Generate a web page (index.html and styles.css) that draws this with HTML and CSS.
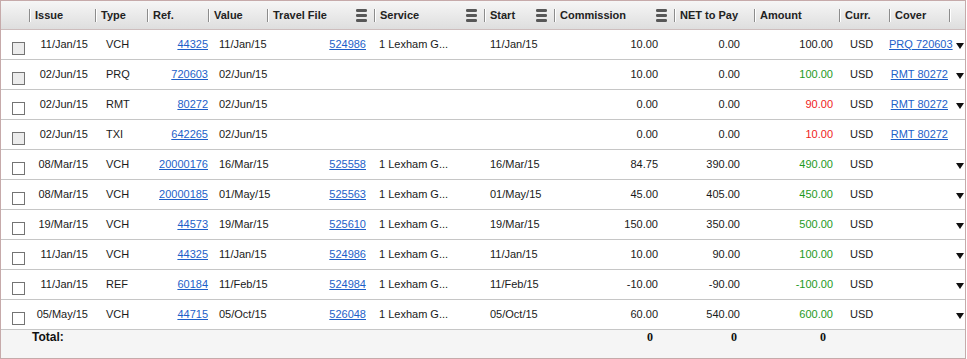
FILE: index.html
```html
<!DOCTYPE html>
<html>
<head>
<meta charset="utf-8">
<link rel="stylesheet" href="styles.css">
</head>
<body>
<div class="grid">
  <div class="row head">
    <div class="hc"></div>
    <div class="hc sep"><span>Issue</span></div>
    <div class="hc sep"><span>Type</span></div>
    <div class="hc sep"><span>Ref.</span></div>
    <div class="hc sep"><span>Value</span></div>
    <div class="hc sep menu"><span>Travel File</span><svg class="ham" width="11" height="13" viewBox="0 0 11 13"><rect x="0" y="0" width="11" height="3" rx="1.3"/><rect x="0" y="5" width="11" height="3" rx="1.3"/><rect x="0" y="10" width="11" height="3" rx="1.3"/></svg></div>
    <div class="hc sep menu"><span>Service</span><svg class="ham" width="11" height="13" viewBox="0 0 11 13"><rect x="0" y="0" width="11" height="3" rx="1.3"/><rect x="0" y="5" width="11" height="3" rx="1.3"/><rect x="0" y="10" width="11" height="3" rx="1.3"/></svg></div>
    <div class="hc sep menu"><span>Start</span><svg class="ham" width="11" height="13" viewBox="0 0 11 13"><rect x="0" y="0" width="11" height="3" rx="1.3"/><rect x="0" y="5" width="11" height="3" rx="1.3"/><rect x="0" y="10" width="11" height="3" rx="1.3"/></svg></div>
    <div class="hc sep menu"><span>Commission</span><svg class="ham" width="11" height="13" viewBox="0 0 11 13"><rect x="0" y="0" width="11" height="3" rx="1.3"/><rect x="0" y="5" width="11" height="3" rx="1.3"/><rect x="0" y="10" width="11" height="3" rx="1.3"/></svg></div>
    <div class="hc sep"><span>NET to Pay</span></div>
    <div class="hc sep"><span>Amount</span></div>
    <div class="hc sep"><span>Curr.</span></div>
    <div class="hc sep"><span>Cover</span></div>
    <div class="hc sep"></div>
  </div>

  <div class="row">
    <div class="c"><span class="cb grey"></span></div>
    <div class="c issue">11/Jan/15</div><div class="c type">VCH</div><div class="c ref"><a href="#">44325</a></div><div class="c value">11/Jan/15</div>
    <div class="c tf"><a href="#">524986</a></div><div class="c svc">1 Lexham G...</div><div class="c start">11/Jan/15</div>
    <div class="c comm">10.00</div><div class="c net">0.00</div><div class="c amt">100.00</div><div class="c curr">USD</div>
    <div class="c cover"><a href="#">PRQ 720603</a></div><div class="c dd"><span class="arrow"></span></div>
  </div>
  <div class="row">
    <div class="c"><span class="cb grey"></span></div>
    <div class="c issue">02/Jun/15</div><div class="c type">PRQ</div><div class="c ref"><a href="#">720603</a></div><div class="c value">02/Jun/15</div>
    <div class="c tf"></div><div class="c svc"></div><div class="c start"></div>
    <div class="c comm">10.00</div><div class="c net">0.00</div><div class="c amt pos">100.00</div><div class="c curr">USD</div>
    <div class="c cover"><a href="#">RMT 80272</a></div><div class="c dd"><span class="arrow"></span></div>
  </div>
  <div class="row">
    <div class="c"><span class="cb"></span></div>
    <div class="c issue">02/Jun/15</div><div class="c type">RMT</div><div class="c ref"><a href="#">80272</a></div><div class="c value">02/Jun/15</div>
    <div class="c tf"></div><div class="c svc"></div><div class="c start"></div>
    <div class="c comm">0.00</div><div class="c net">0.00</div><div class="c amt neg">90.00</div><div class="c curr">USD</div>
    <div class="c cover"><a href="#">RMT 80272</a></div><div class="c dd"><span class="arrow"></span></div>
  </div>
  <div class="row">
    <div class="c"><span class="cb grey"></span></div>
    <div class="c issue">02/Jun/15</div><div class="c type">TXI</div><div class="c ref"><a href="#">642265</a></div><div class="c value">02/Jun/15</div>
    <div class="c tf"></div><div class="c svc"></div><div class="c start"></div>
    <div class="c comm">0.00</div><div class="c net">0.00</div><div class="c amt neg">10.00</div><div class="c curr">USD</div>
    <div class="c cover"><a href="#">RMT 80272</a></div><div class="c dd"></div>
  </div>
  <div class="row">
    <div class="c"><span class="cb"></span></div>
    <div class="c issue">08/Mar/15</div><div class="c type">VCH</div><div class="c ref"><a href="#">20000176</a></div><div class="c value">16/Mar/15</div>
    <div class="c tf"><a href="#">525558</a></div><div class="c svc">1 Lexham G...</div><div class="c start">16/Mar/15</div>
    <div class="c comm">84.75</div><div class="c net">390.00</div><div class="c amt pos">490.00</div><div class="c curr">USD</div>
    <div class="c cover"></div><div class="c dd"><span class="arrow"></span></div>
  </div>
  <div class="row">
    <div class="c"><span class="cb"></span></div>
    <div class="c issue">08/Mar/15</div><div class="c type">VCH</div><div class="c ref"><a href="#">20000185</a></div><div class="c value">01/May/15</div>
    <div class="c tf"><a href="#">525563</a></div><div class="c svc">1 Lexham G...</div><div class="c start">01/May/15</div>
    <div class="c comm">45.00</div><div class="c net">405.00</div><div class="c amt pos">450.00</div><div class="c curr">USD</div>
    <div class="c cover"></div><div class="c dd"><span class="arrow"></span></div>
  </div>
  <div class="row">
    <div class="c"><span class="cb"></span></div>
    <div class="c issue">19/Mar/15</div><div class="c type">VCH</div><div class="c ref"><a href="#">44573</a></div><div class="c value">19/Mar/15</div>
    <div class="c tf"><a href="#">525610</a></div><div class="c svc">1 Lexham G...</div><div class="c start">19/Mar/15</div>
    <div class="c comm">150.00</div><div class="c net">350.00</div><div class="c amt pos">500.00</div><div class="c curr">USD</div>
    <div class="c cover"></div><div class="c dd"><span class="arrow"></span></div>
  </div>
  <div class="row">
    <div class="c"><span class="cb"></span></div>
    <div class="c issue">11/Jan/15</div><div class="c type">VCH</div><div class="c ref"><a href="#">44325</a></div><div class="c value">11/Jan/15</div>
    <div class="c tf"><a href="#">524986</a></div><div class="c svc">1 Lexham G...</div><div class="c start">11/Jan/15</div>
    <div class="c comm">10.00</div><div class="c net">90.00</div><div class="c amt pos">100.00</div><div class="c curr">USD</div>
    <div class="c cover"></div><div class="c dd"><span class="arrow"></span></div>
  </div>
  <div class="row">
    <div class="c"><span class="cb"></span></div>
    <div class="c issue">11/Jan/15</div><div class="c type">REF</div><div class="c ref"><a href="#">60184</a></div><div class="c value">11/Feb/15</div>
    <div class="c tf"><a href="#">524984</a></div><div class="c svc">1 Lexham G...</div><div class="c start">11/Feb/15</div>
    <div class="c comm">-10.00</div><div class="c net">-90.00</div><div class="c amt pos">-100.00</div><div class="c curr">USD</div>
    <div class="c cover"></div><div class="c dd"><span class="arrow"></span></div>
  </div>
  <div class="row">
    <div class="c"><span class="cb"></span></div>
    <div class="c issue">05/May/15</div><div class="c type">VCH</div><div class="c ref"><a href="#">44715</a></div><div class="c value">05/Oct/15</div>
    <div class="c tf"><a href="#">526048</a></div><div class="c svc">1 Lexham G...</div><div class="c start">05/Oct/15</div>
    <div class="c comm">60.00</div><div class="c net">540.00</div><div class="c amt pos">600.00</div><div class="c curr">USD</div>
    <div class="c cover"></div><div class="c dd"><span class="arrow"></span></div>
  </div>

  <div class="row total">
    <div class="t"></div>
    <div class="t tlabel">Total:</div>
    <div class="t"></div><div class="t"></div><div class="t"></div><div class="t"></div><div class="t"></div><div class="t"></div>
    <div class="t tnum tcomm">0</div><div class="t tnum tnet">0</div><div class="t tnum tamt">0</div>
    <div class="t"></div><div class="t"></div><div class="t"></div>
  </div>
</div>
</body>
</html>
```
FILE: styles.css
```css
html, body {
  margin: 0;
  padding: 0;
  background: #ffffff;
}

.grid {
  width: 964px;
  border: 1px solid #c6aaaa;
  font-family: "Liberation Sans", Arial, sans-serif;
  font-size: 11px;
  color: #1a1a1a;
}

.row {
  display: grid;
  grid-template-columns: 28px 66px 52px 61px 59px 107px 110px 70px 120px 80px 85px 50px 60px 16px;
  height: 30px;
  box-sizing: border-box;
  border-bottom: 1px solid #c6c6c6;
  align-items: center;
}

.head {
  height: 29px;
  background: linear-gradient(#f6f6f6, #dedede);
  border-bottom: 1px solid #cdbdbd;
  font-weight: bold;
  color: #222;
}

.hc {
  position: relative;
  height: 100%;
  display: flex;
  align-items: center;
  justify-content: space-between;
  padding: 0 7px 0 6px;
  white-space: nowrap;
}

.hc.sep::before {
  content: "";
  position: absolute;
  left: 0;
  top: 8px;
  width: 1px;
  height: 13px;
  background: #8c8c8c;
  box-shadow: 1px 0 0 #ffffff;
}

.ham {
  display: block;
  fill: #575757;
  margin-top: 1px;
}

.c {
  white-space: nowrap;
  line-height: 13px;
}

.c a {
  color: #1d5fc9;
  text-decoration: underline;
}

.cb {
  display: block;
  width: 13px;
  height: 13px;
  box-sizing: border-box;
  border: 1px solid #747474;
  background: #ffffff;
  margin: 8px 0 0 11px;
}

.cb.grey {
  background: #ececec;
}

.issue { text-align: right; padding-right: 7px; }
.type { padding-left: 11px; }
.ref { text-align: right; padding-right: 0; }
.value { padding-left: 11px; }
.tf { text-align: right; padding-right: 8px; }
.svc { padding-left: 5px; }
.start { padding-left: 6px; }
.comm { text-align: right; padding-right: 16px; }
.net { text-align: right; padding-right: 14px; }
.amt { text-align: right; padding-right: 6px; }
.amt.pos { color: #1e9a1e; }
.amt.neg { color: #f01c1c; }
.curr { padding-left: 11px; }
.cover { text-align: right; padding-right: 1px; }
.dd { padding-left: 7px; }

.arrow {
  display: block;
  width: 0;
  height: 0;
  border-left: 4px solid transparent;
  border-right: 4px solid transparent;
  border-top: 6px solid #111111;
  margin-top: 2px;
}

.total {
  height: 28px;
  border-bottom: none;
  background: #f5f5f5;
  align-items: start;
  font-weight: bold;
}

.t {
  line-height: 14px;
  white-space: nowrap;
}

.tlabel {
  font-size: 12px;
  padding-left: 3px;
  color: #111;
}

.tnum {
  font-family: "Liberation Serif", "Times New Roman", serif;
  font-size: 12px;
  text-align: right;
  color: #111;
}

.tcomm { padding-right: 21px; }
.tnet { padding-right: 17px; }
.tamt { padding-right: 13px; }
```
